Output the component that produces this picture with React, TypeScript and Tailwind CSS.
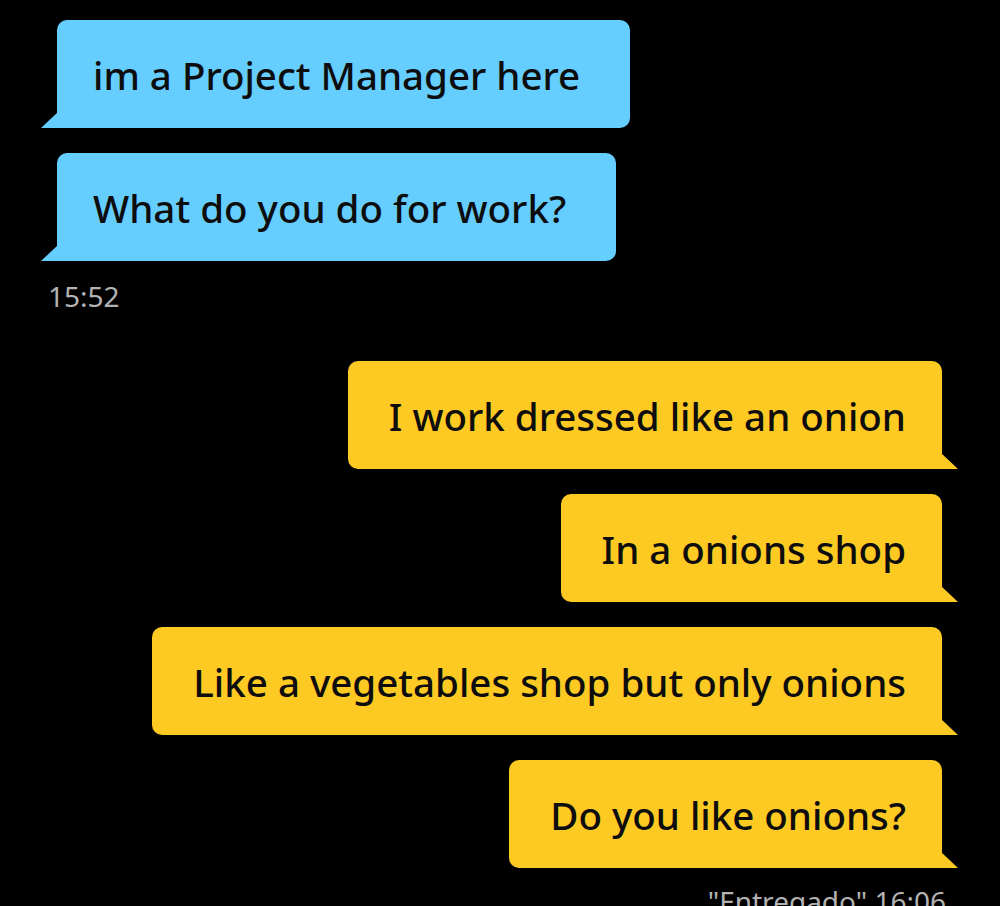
import React from "react";

const font = { fontFamily: '"Noto Sans", "Open Sans", sans-serif' };

function Blue({ text }: { text: string }) {
  return (
    <div className="relative self-start ml-[57px]">
      <div className="h-[108px] flex items-center pl-[36px] pr-[50px] pt-[4px] bg-[#66cdff] rounded-[10px] rounded-bl-none text-[38.5px] font-medium text-[#0d0d0d]">
        {text}
      </div>
      <svg className="absolute left-[-16px] bottom-0" width="17" height="16" viewBox="0 0 17 16">
        <polygon points="17,0 17,16 0,16" fill="#66cdff" />
      </svg>
    </div>
  );
}

function Yellow({ text }: { text: string }) {
  return (
    <div className="relative self-end mr-[58px]">
      <div className="h-[108px] flex items-center pl-[41px] pr-[36px] pt-[4px] bg-[#fdc923] rounded-[10px] rounded-br-none text-[38.5px] font-medium text-[#0d0d0d]">
        {text}
      </div>
      <svg className="absolute right-[-16px] bottom-0" width="17" height="16" viewBox="0 0 17 16">
        <polygon points="0,0 17,16 0,16" fill="#fdc923" />
      </svg>
    </div>
  );
}

export default function App() {
  return (
    <div className="w-[1000px] h-[906px] bg-black overflow-hidden flex flex-col pt-[20px]" style={font}>
      <div className="flex flex-col gap-[25px]">
        <Blue text="im a Project Manager here" />
        <Blue text="What do you do for work?" />
      </div>
      <div className="ml-[48px] mt-[15px] text-[28px] text-[#b3b3b3] leading-[40px]">15:52</div>
      <div className="flex flex-col gap-[25px] mt-[45px]">
        <Yellow text="I work dressed like an onion" />
        <Yellow text="In a onions shop" />
        <Yellow text="Like a vegetables shop but only onions" />
        <Yellow text="Do you like onions?" />
      </div>
      <div className="self-end mr-[54px] mt-[13px] text-[28px] text-[#b3b3b3] leading-[40px]">"Entregado" 16:06</div>
    </div>
  );
}
